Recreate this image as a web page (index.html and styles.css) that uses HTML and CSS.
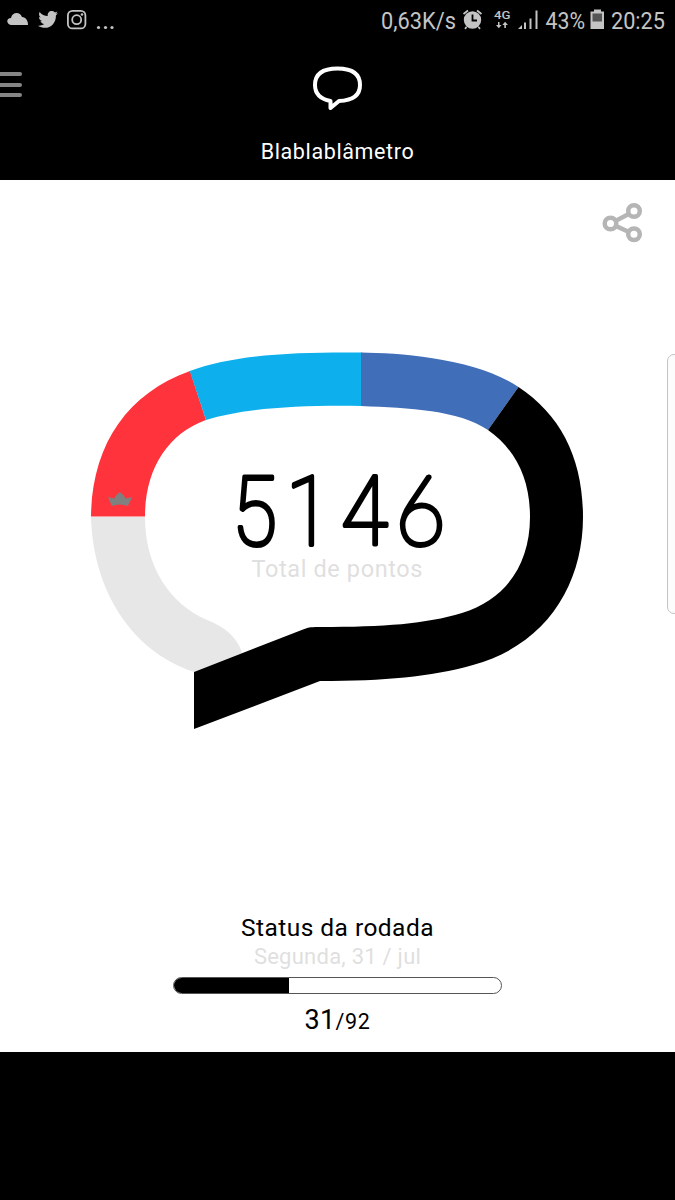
FILE: index.html
```html
<!DOCTYPE html>
<html lang="pt-BR">
<head>
<meta charset="utf-8">
<title>Blablablâmetro</title>
<link rel="stylesheet" href="styles.css">
</head>
<body>
<div class="status-bar">
  <svg class="status-icons" width="120" height="40" viewBox="0 0 120 40">
    <path d="M11 25C6 24 6 18 11 18C12 12 20 11 22 17C26 17 28 21 28 25Z"/>
    <path d="M58 13.100c-.7.3-1.500.5-2.300.6.8-.5 1.400-1.300 1.700-2.200-.8.5-1.600.8-2.500 1-3-3.200-8-.8-7.100 3.600-3.300-.2-6.200-1.700-8.200-4.200-1.100 1.900-.6 4.300 1.200 5.500-.7 0-1.300-.2-1.800-.5 0 2 1.400 3.700 3.200 4.100-.6.2-1.200.2-1.800.1.500 1.600 2 2.800 3.800 2.900-1.700 1.300-3.900 1.900-6.200 1.700 8.800 5.400 18.200-.4 17.900-10.300.8-.6 1.500-1.300 2.100-2.300Z"/>
    <rect class="line" x="67.900" y="10.900" width="17.500" height="17.500" rx="4.500"/>
    <circle class="line" cx="76.700" cy="19.700" r="4.500"/>
    <circle cx="82" cy="14.500" r="1.300"/>
    <circle cx="98.500" cy="27.500" r="1.600"/><circle cx="105.500" cy="27.500" r="1.600"/><circle cx="112" cy="27.500" r="1.600"/>
  </svg>
  <svg class="status-icons" width="305" height="40" viewBox="370 0 305 40">
    <text x="381" y="29" font-size="24.500" textLength="75" lengthAdjust="spacingAndGlyphs">0,63K/s</text>
    <circle cx="472.500" cy="20" r="8.700"/>
    <path class="line" d="M463.500 14l4.500-3.500M481.500 14l-4.500-3.500M466.500 27l-1.500 1.800M478.500 27l1.500 1.800"/>
    <path class="cut" d="M472.500 14.500v6h4.500"/>
    <text class="network" x="494" y="18.500" font-size="11.500" textLength="16.500" lengthAdjust="spacingAndGlyphs">4G</text>
    <path d="M498 22h1.500v3h2l-2.700 3.200-2.800-3.200h2ZM504.300 28h1.600v-3h2l-2.800-3.200-2.800 3.200h2Z"/>
    <path d="M518 29l4-4v4ZM524 22.500h2v6.500h-2ZM529.500 18.500h2v10.500h-2ZM535.500 10.500h2v18.500h-2Z"/>
    <text x="545.500" y="29" font-size="24.500" textLength="39.500" lengthAdjust="spacingAndGlyphs">43%</text>
    <path d="M594 9.500h7v2h3v17.500h-13.500v-17.500h3.500Z"/>
    <path class="battery-empty" d="M592.500 13.500h9.500v8h-9.500Z"/>
    <text x="611" y="29" font-size="24.500" textLength="54" lengthAdjust="spacingAndGlyphs">20:25</text>
  </svg>
</div>
<header class="header">
  <div class="menu"><span class="menu-line"></span><span class="menu-line"></span><span class="menu-line"></span></div>
  <svg class="logo" width="50" height="46" viewBox="313 65 50 46">
    <path d="M337.500 68.500C350 68.500 360 72 360 85C360 95 353 100.500 339 101L330.500 108V101C320 99 315 93.500 315 85C315 72 325 68.500 337.500 68.500Z"/>
  </svg>
  <h1 class="title">Blablablâmetro</h1>
</header>
<main class="main">
  <svg class="share" width="42" height="42" viewBox="602 202 42 42">
    <path d="M634.500 211L610.500 223.500L634.500 234.500"/>
    <circle cx="634" cy="211" r="5.800"/><circle cx="610.500" cy="223.500" r="5.800"/><circle cx="634" cy="234.300" r="5.800"/>
  </svg>
  <svg class="meter" width="495" height="380" viewBox="90 351 495 380">
    <path class="segment-red" d="M91 516.500C92 446 126 394 190 371L206 420C167 434 145 470 145 516.500Z"/>
    <path class="segment-cyan" d="M189.700 371C236 354 296 352 362 352.500V406C300 405 245 408 206 420Z"/>
    <path class="segment-blue" d="M361 352.500C400 353 475 358 518.500 387L488 430C458 410 410 408 361 406Z"/>
    <path class="segment-gray" d="M91 517C93 590 131 651 194 672L242 653C239 641 228 628 207 620C170 604 145 567 145 517Z"/>
    <path d="M518.500 387C561 415 583 459 583 517C583 585 546 645 473 665C430 677 385 681 320 681L194 729V672L303 629.500C309 627 313 627 320 627C385 627 425 624 462 613C505 600 530 565 530 517C530 478 515 449 488 430Z"/>
    <path class="crown" d="M108 497l6 1.500 2.500-3.500 3.300-3 3.500 3 2.500 3.500 6.500-1.500-4.500 9q-8-3-16 0Z"/>
    <g class="score">
      <text x="232" y="545" textLength="45" lengthAdjust="spacingAndGlyphs">5</text>
      <text x="286" y="545" textLength="45" lengthAdjust="spacingAndGlyphs">1</text>
      <text x="341" y="545" textLength="47" lengthAdjust="spacingAndGlyphs">4</text>
      <text class="six" x="395" y="545" textLength="51" lengthAdjust="spacingAndGlyphs">6</text>
    </g>
    <text class="caption" x="251.500" y="577" textLength="171">Total de pontos</text>
  </svg>
  <div class="side-handle"></div>
  <section class="round">
    <h2 class="round-title">Status da rodada</h2>
    <p class="round-date">Segunda, 31 / jul</p>
    <div class="progress"><div class="progress-fill"></div></div>
    <p class="count">31<span class="count-total">/92</span></p>
  </section>
</main>
</body>
</html>
```
FILE: styles.css
```css
* { box-sizing: border-box; }
body {
  margin: 0;
  width: 675px;
  height: 1200px;
  background: #000;
  font-family: Roboto, "Liberation Sans", sans-serif;
  overflow: hidden;
}
.status-bar { display: flex; justify-content: space-between; height: 40px; }
.status-icons { fill: #c4c4c4; }
.status-icons .line { fill: none; stroke: #c4c4c4; stroke-width: 1.8; }
.status-icons .cut { fill: none; stroke: #000; stroke-width: 1.8; }
.network { font-weight: 500; }
.battery-empty { fill: #555; }
.header {
  position: relative;
  display: flex;
  flex-direction: column;
  align-items: center;
  height: 140px;
  padding-top: 25px;
}
.menu {
  position: absolute;
  top: 32px;
  left: 0;
  display: grid;
  gap: 6.6px;
}
.menu-line { width: 22px; height: 4px; border-radius: 0 2px 2px 0; background: #858585; }
.logo { fill: none; stroke: #fff; stroke-width: 4; stroke-linejoin: round; }
.title {
  margin: 27px 0 0;
  color: #fff;
  font-size: 21.5px;
  font-weight: 400;
  line-height: 28px;
  letter-spacing: 0.62px;
}
.main {
  position: relative;
  display: flex;
  flex-direction: column;
  align-items: center;
  height: 872px;
  padding-top: 22px;
  background: #fff;
}
.share { align-self: flex-end; margin-right: 31px; fill: #fff; stroke: #b5b5b5; stroke-width: 4.5; }
.meter { margin-top: 107px; }
.segment-red { fill: #ff333b; }
.segment-cyan { fill: #0dafed; }
.segment-blue { fill: #406eb8; }
.segment-gray { fill: #e7e7e7; }
.crown { fill: #808080; }
.score {
  font-size: 97px;
  font-weight: 100;
  stroke: #000;
  stroke-width: 4;
  stroke-linejoin: round;
}
.six { font-family: Lato, Roboto, sans-serif; stroke-width: 5; }
.caption { fill: #dfdfdf; font-size: 23.5px; }
.side-handle {
  position: absolute;
  top: 174px;
  right: -8px;
  width: 16px;
  height: 260px;
  border: 1.5px solid #c4c4c4;
  border-radius: 7px;
  background: #fcfcfc;
}
.round { display: flex; flex-direction: column; align-items: center; margin-top: 182px; }
.round-title, .round-date, .count { margin: 0; font-weight: 400; white-space: nowrap; }
.round-title { font-size: 24.5px; line-height: 30px; letter-spacing: 0.45px; }
.round-date { color: #dfdfdf; font-size: 22px; line-height: 28px; letter-spacing: 0.25px; }
.progress {
  width: 329px;
  height: 17px;
  margin-top: 6px;
  overflow: hidden;
  border: 1px solid #555;
  border-radius: 9px;
}
.progress-fill { width: 115px; height: 100%; background: #000; }
.count { margin-top: 9px; font-size: 27px; line-height: 34px; letter-spacing: 0.3px; }
.count-total { font-size: 21.5px; letter-spacing: 0.7px; }
```
